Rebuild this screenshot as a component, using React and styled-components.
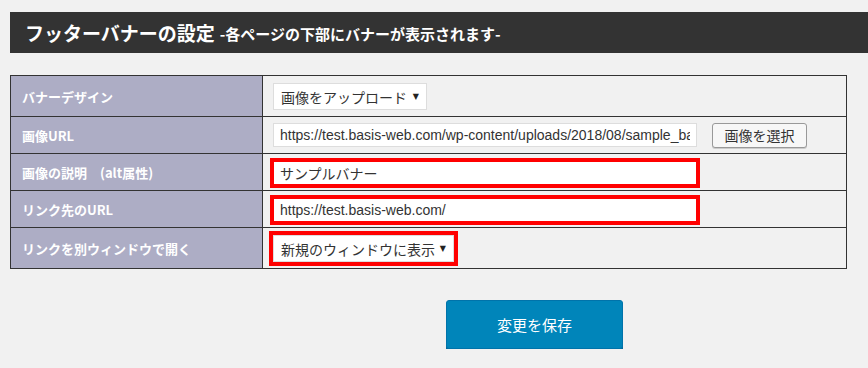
import React from 'react'
import styled, { createGlobalStyle } from 'styled-components'

const GlobalStyle = createGlobalStyle`
  html, body {
    margin: 0;
    padding: 0;
    background: #f1f1f1;
  }
  body {
    font-family: "Noto Sans CJK JP", "Liberation Sans", sans-serif;
    color: #333;
  }
`

const Page = styled.div`
  padding: 12px 0 0 10px;
`
const Header = styled.h2`
  margin: 0;
  height: 41px;
  background: #333;
  color: #fff;
  display: flex;
  align-items: center;
  padding-left: 15px;
  font-size: 19px;
  font-weight: 700;
  line-height: 1;
`
const Sub = styled.span`
  font-size: 15px;
  margin-left: 5px;
  padding-top: 2px;
`
const Table = styled.table`
  margin-top: 22px;
  width: 837px;
  border-collapse: collapse;
  border: 1px solid #333;
`
const Row = styled.tr`
  height: ${props => (props.tall ? '41px' : '37px')};
`
const Label = styled.th`
  width: 252px;
  box-sizing: border-box;
  background: #adadc5;
  border: 1px solid #333;
  color: #fff;
  font-size: 13px;
  font-weight: 700;
  text-align: left;
  padding: 0 11px;
  white-space: pre;
`
const Cell = styled.td`
  border: 1px solid #333;
  padding: 0 10px;
  background: #f1f1f1;
`
const Line = styled.div`
  display: flex;
  align-items: center;
`
const Select = styled.div`
  display: inline-flex;
  align-items: center;
  box-sizing: border-box;
  height: 27px;
  width: ${props => props.width}px;
  padding: 0 7px 0 7px;
  background: #fff;
  border: 1px solid #ddd;
  font-size: 14px;
  color: #333;
  justify-content: space-between;
  vertical-align: middle;
  outline: ${props => (props.highlight ? '4px solid #ff0000' : 'none')};
`
const Caret = styled.span`
  font-size: 8px;
  color: #222;
  font-family: "DejaVu Sans", sans-serif;
`
const Input = styled.input`
  box-sizing: border-box;
  width: 424px;
  height: 24px;
  padding: 0 6px;
  background: #fff;
  border: 1px solid #ddd;
  font-family: "Liberation Sans", "Noto Sans CJK JP", sans-serif;
  font-size: 14px;
  color: #333;
  outline: ${props => (props.highlight ? '4px solid #ff0000' : 'none')};
  outline-offset: -1px;
  vertical-align: middle;
  &.jp {
    font-family: "Noto Sans CJK JP", sans-serif;
  }
`
const PickButton = styled.button`
  margin-left: 15px;
  height: 25px;
  width: 95px;
  padding: 0;
  background: #f7f7f7;
  border: 1px solid #999;
  border-radius: 3px;
  font-family: "Noto Sans CJK JP", sans-serif;
  font-size: 14px;
  color: #333;
  box-shadow: 0 1px 0 #ccc;
`
const Footer = styled.div`
  padding: 31px 0 0 436px;
`
const SaveButton = styled.button`
  width: 177px;
  height: 49px;
  background: #0085ba;
  border: 1px solid #0073aa;
  border-radius: 3px;
  box-shadow: 0 2px 0 #006799;
  color: #fff;
  font-family: "Noto Sans CJK JP", sans-serif;
  font-size: 15px;
  padding: 0;
`

export default function App() {
  return (
    <Page>
      <GlobalStyle />
      <Header>
        フッターバナーの設定<Sub>-各ページの下部にバナーが表示されます-</Sub>
      </Header>
      <Table>
        <tbody>
          <Row tall>
            <Label>バナーデザイン</Label>
            <Cell>
              <Select width={154}>
                画像をアップロード<Caret>▼</Caret>
              </Select>
            </Cell>
          </Row>
          <Row>
            <Label>画像URL</Label>
            <Cell>
              <Line>
                <Input
                  readOnly
                  value="https://test.basis-web.com/wp-content/uploads/2018/08/sample_banner.png"
                />
                <PickButton>画像を選択</PickButton>
              </Line>
            </Cell>
          </Row>
          <Row>
            <Label>{'画像の説明　(alt属性)'}</Label>
            <Cell>
              <Input className="jp" highlight readOnly value="サンプルバナー" />
            </Cell>
          </Row>
          <Row>
            <Label>リンク先のURL</Label>
            <Cell>
              <Input highlight readOnly value="https://test.basis-web.com/" />
            </Cell>
          </Row>
          <Row tall>
            <Label>リンクを別ウィンドウで開く</Label>
            <Cell>
              <Select width={181} highlight>
                新規のウィンドウに表示<Caret>▼</Caret>
              </Select>
            </Cell>
          </Row>
        </tbody>
      </Table>
      <Footer>
        <SaveButton>変更を保存</SaveButton>
      </Footer>
    </Page>
  )
}
